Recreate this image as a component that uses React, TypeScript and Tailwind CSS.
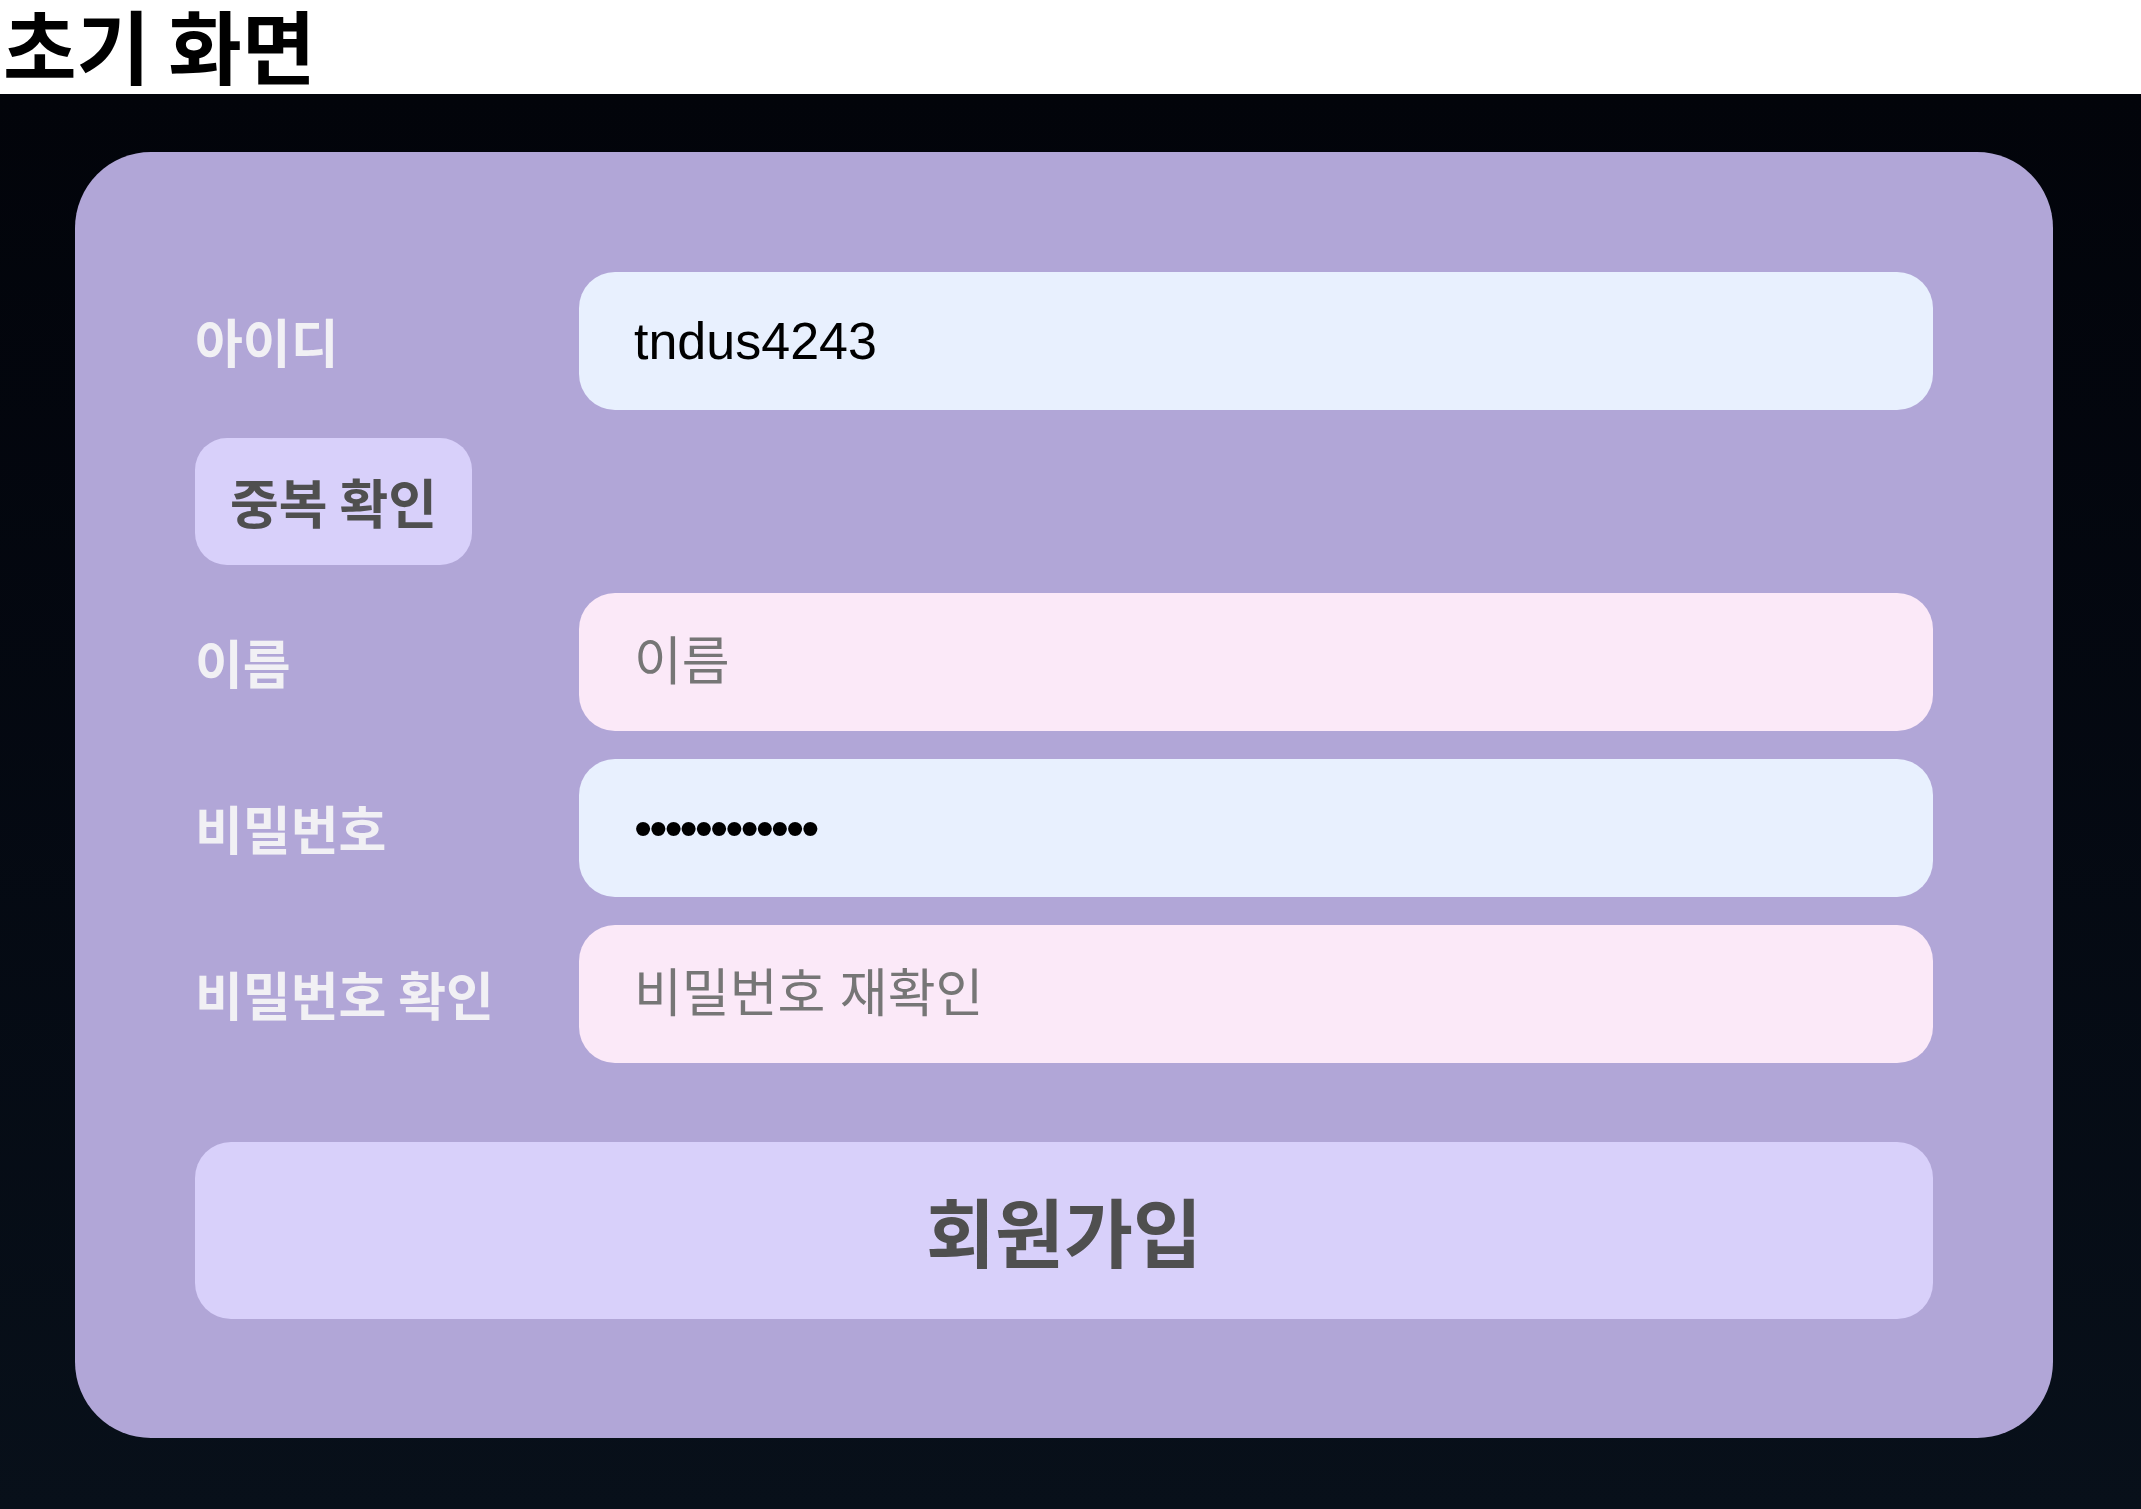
import { useState } from 'react';

const kr = "font-['Noto_Sans_CJK_KR',sans-serif]";
const field = "font-['Liberation_Sans','Noto_Sans_CJK_KR',sans-serif]";

function Row({ label, children }: { label: string; children: React.ReactNode }) {
  return (
    <div className="flex items-center">
      <label className={`${kr} w-[384px] shrink-0 text-[52px] font-bold leading-none text-[#f1f0f4]`}>
        {label}
      </label>
      {children}
    </div>
  );
}

export default function App() {
  const [userId, setUserId] = useState('tndus4243');
  const [name, setName] = useState('');
  const [password, setPassword] = useState('............');
  const [confirm, setConfirm] = useState('');

  const inputBase = `${field} h-[138px] flex-1 rounded-[36px] px-[55px] text-[52px] text-black outline-none placeholder:text-[#767676]`;

  return (
    <div className="min-h-screen bg-white">
      {/* Title */}
      <h1 className={`${kr} pb-[8px] pl-[3px] text-[80px] font-bold leading-[86px] text-black`}>초기 화면</h1>

      {/* Sign-up panel */}
      <div className="min-h-[1415px] bg-gradient-to-b from-[#02040a] to-[#08101a] pt-[58px] pb-[71px] pl-[75px]">
        <form
          className="w-[1978px] rounded-[76px] bg-[#b1a6d7] p-[120px] pb-[119px]"
          onSubmit={(e) => e.preventDefault()}
        >
          <div className="flex flex-col gap-[28px]">
            <Row label="아이디">
              <input
                className={`${inputBase} bg-[#e8f0fe]`}
                value={userId}
                onChange={(e) => setUserId(e.target.value)}
              />
            </Row>

            <div>
              <button
                type="button"
                className={`${kr} h-[127px] w-[277px] rounded-[32px] bg-[#d8d0fa] text-[53px] font-bold text-[#4f4f4f]`}
              >
                중복 확인
              </button>
            </div>

            <Row label="이름">
              <input
                className={`${inputBase} bg-[#fbe9f8]`}
                placeholder="이름"
                value={name}
                onChange={(e) => setName(e.target.value)}
              />
            </Row>

            <Row label="비밀번호">
              <input
                type="password"
                className={`${inputBase} bg-[#e8f0fe] tracking-[-3px]`}
                value={password}
                onChange={(e) => setPassword(e.target.value)}
              />
            </Row>

            <Row label="비밀번호 확인">
              <input
                type="password"
                className={`${inputBase} bg-[#fbe9f8] placeholder:tracking-normal`}
                placeholder="비밀번호 재확인"
                value={confirm}
                onChange={(e) => setConfirm(e.target.value)}
              />
            </Row>
          </div>

          <button
            type="submit"
            className={`${kr} mt-[79px] h-[177px] w-full rounded-[36px] bg-[#d8d0fa] text-[75px] font-bold text-[#4f4f4f]`}
          >
            회원가입
          </button>
        </form>
      </div>
    </div>
  );
}
